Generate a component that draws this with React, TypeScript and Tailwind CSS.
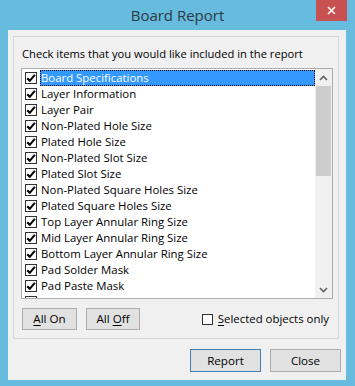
import React from "react";

const items = [
  "Board Specifications",
  "Layer Information",
  "Layer Pair",
  "Non-Plated Hole Size",
  "Plated Hole Size",
  "Non-Plated Slot Size",
  "Plated Slot Size",
  "Non-Plated Square Holes Size",
  "Plated Square Holes Size",
  "Top Layer Annular Ring Size",
  "Mid Layer Annular Ring Size",
  "Bottom Layer Annular Ring Size",
  "Pad Solder Mask",
  "Pad Paste Mask",
];

function Check({ checked }: { checked: boolean }) {
  return (
    <div className="w-[12px] h-[12px] border border-[#333333] bg-white flex items-center justify-center shrink-0">
      {checked && (
        <svg width="10" height="10" viewBox="0 0 10 10">
          <path d="M1.2 5.2 L3.8 7.8 L8.8 1.8" fill="none" stroke="#000" strokeWidth="2.1" />
        </svg>
      )}
    </div>
  );
}

export default function App() {
  return (
    <div
      className="w-[355px] h-[386px] bg-[#67bbdf] flex flex-col overflow-hidden"
      style={{ fontFamily: '"Open Sans", "Noto Sans", sans-serif' }}
    >
      <div className="h-[30px] relative flex items-center justify-center shrink-0">
        <span className="text-[15px] text-[#2b3a42] leading-none mt-[1px]">Board Report</span>
        <div className="absolute right-[8px] top-0 w-[31px] h-[21px] bg-[#c75050] flex items-center justify-center">
          <svg width="9" height="9" viewBox="0 0 9 9">
            <path d="M1 1 L8 8 M8 1 L1 8" stroke="#fff" strokeWidth="1.6" />
          </svg>
        </div>
      </div>
      <div className="ml-[8px] mr-[9px] mb-[6px] flex-1 bg-[#f0f0f0] flex flex-col">
        <div className="mt-[6px] ml-[5px] mr-[7px] h-[303px] border border-[#d5d5d5] flex flex-col">
          <div className="text-[11.2px] text-black leading-none pl-[8px] pt-[11px] h-[31px]">
            Check items that you would like included in the report
          </div>
          <div className="ml-[7px] mr-[5px] h-[231px] border border-[#abadb3] bg-white flex">
            <div className="flex-1 pt-[1px] overflow-hidden">
              {items.map((t, i) => (
                <div key={t} className="h-[16px] flex items-center pl-[3px]">
                  <Check checked={true} />
                  <span
                    className={
                      "ml-[3px] flex-1 h-[16px] flex items-center pl-[1px] text-[11.4px] leading-none " +
                      (i === 0
                        ? "bg-[#3399ff] text-white outline outline-1 outline-dotted outline-[#000] -outline-offset-1"
                        : "text-black")
                    }
                  >
                    {t}
                  </span>
                </div>
              ))}
              <div className="h-[16px] pl-[3px] pt-[2px]">
                <Check checked={true} />
              </div>
            </div>
            <div className="w-[17px] bg-[#f0f0f0] flex flex-col">
              <div className="h-[17px] flex items-center justify-center">
                <svg width="9" height="6" viewBox="0 0 9 6">
                  <path d="M1 5 L4.5 1.5 L8 5" fill="none" stroke="#606060" strokeWidth="1.6" />
                </svg>
              </div>
              <div className="mx-[1px] h-[90px] bg-[#cdcdcd]" />
              <div className="flex-1" />
              <div className="h-[17px] flex items-center justify-center">
                <svg width="9" height="6" viewBox="0 0 9 6">
                  <path d="M1 1 L4.5 4.5 L8 1" fill="none" stroke="#606060" strokeWidth="1.6" />
                </svg>
              </div>
            </div>
          </div>
          <div className="flex items-center mt-[9px] pl-[8px] pr-[9px]">
            <button className="w-[55px] h-[22px] border border-[#adadad] bg-[#e1e1e1] text-[11.6px] text-black leading-none">
              <span className="underline underline-offset-2">A</span>ll On
            </button>
            <button className="ml-[9px] w-[54px] h-[22px] border border-[#adadad] bg-[#e1e1e1] text-[11.6px] text-black leading-none">
              All <span className="underline underline-offset-2">O</span>ff
            </button>
            <div className="flex-1" />
            <div className="flex items-center">
              <div className="w-[11px] h-[11px] border border-[#333333] bg-white" />
              <span className="ml-[5px] text-[11.4px] text-black leading-none">
                <span className="underline underline-offset-2">S</span>elected objects only
              </span>
            </div>
          </div>
        </div>
        <div className="flex justify-end gap-[9px] mt-[10px] pr-[5px]">
          <button className="w-[71px] h-[23px] border border-[#3c7fb1] bg-[#e1e1e1] text-[11.6px] text-black leading-none">
            Report
          </button>
          <button className="w-[71px] h-[23px] border border-[#adadad] bg-[#e1e1e1] text-[11.6px] text-black leading-none">
            Close
          </button>
        </div>
      </div>
    </div>
  );
}
